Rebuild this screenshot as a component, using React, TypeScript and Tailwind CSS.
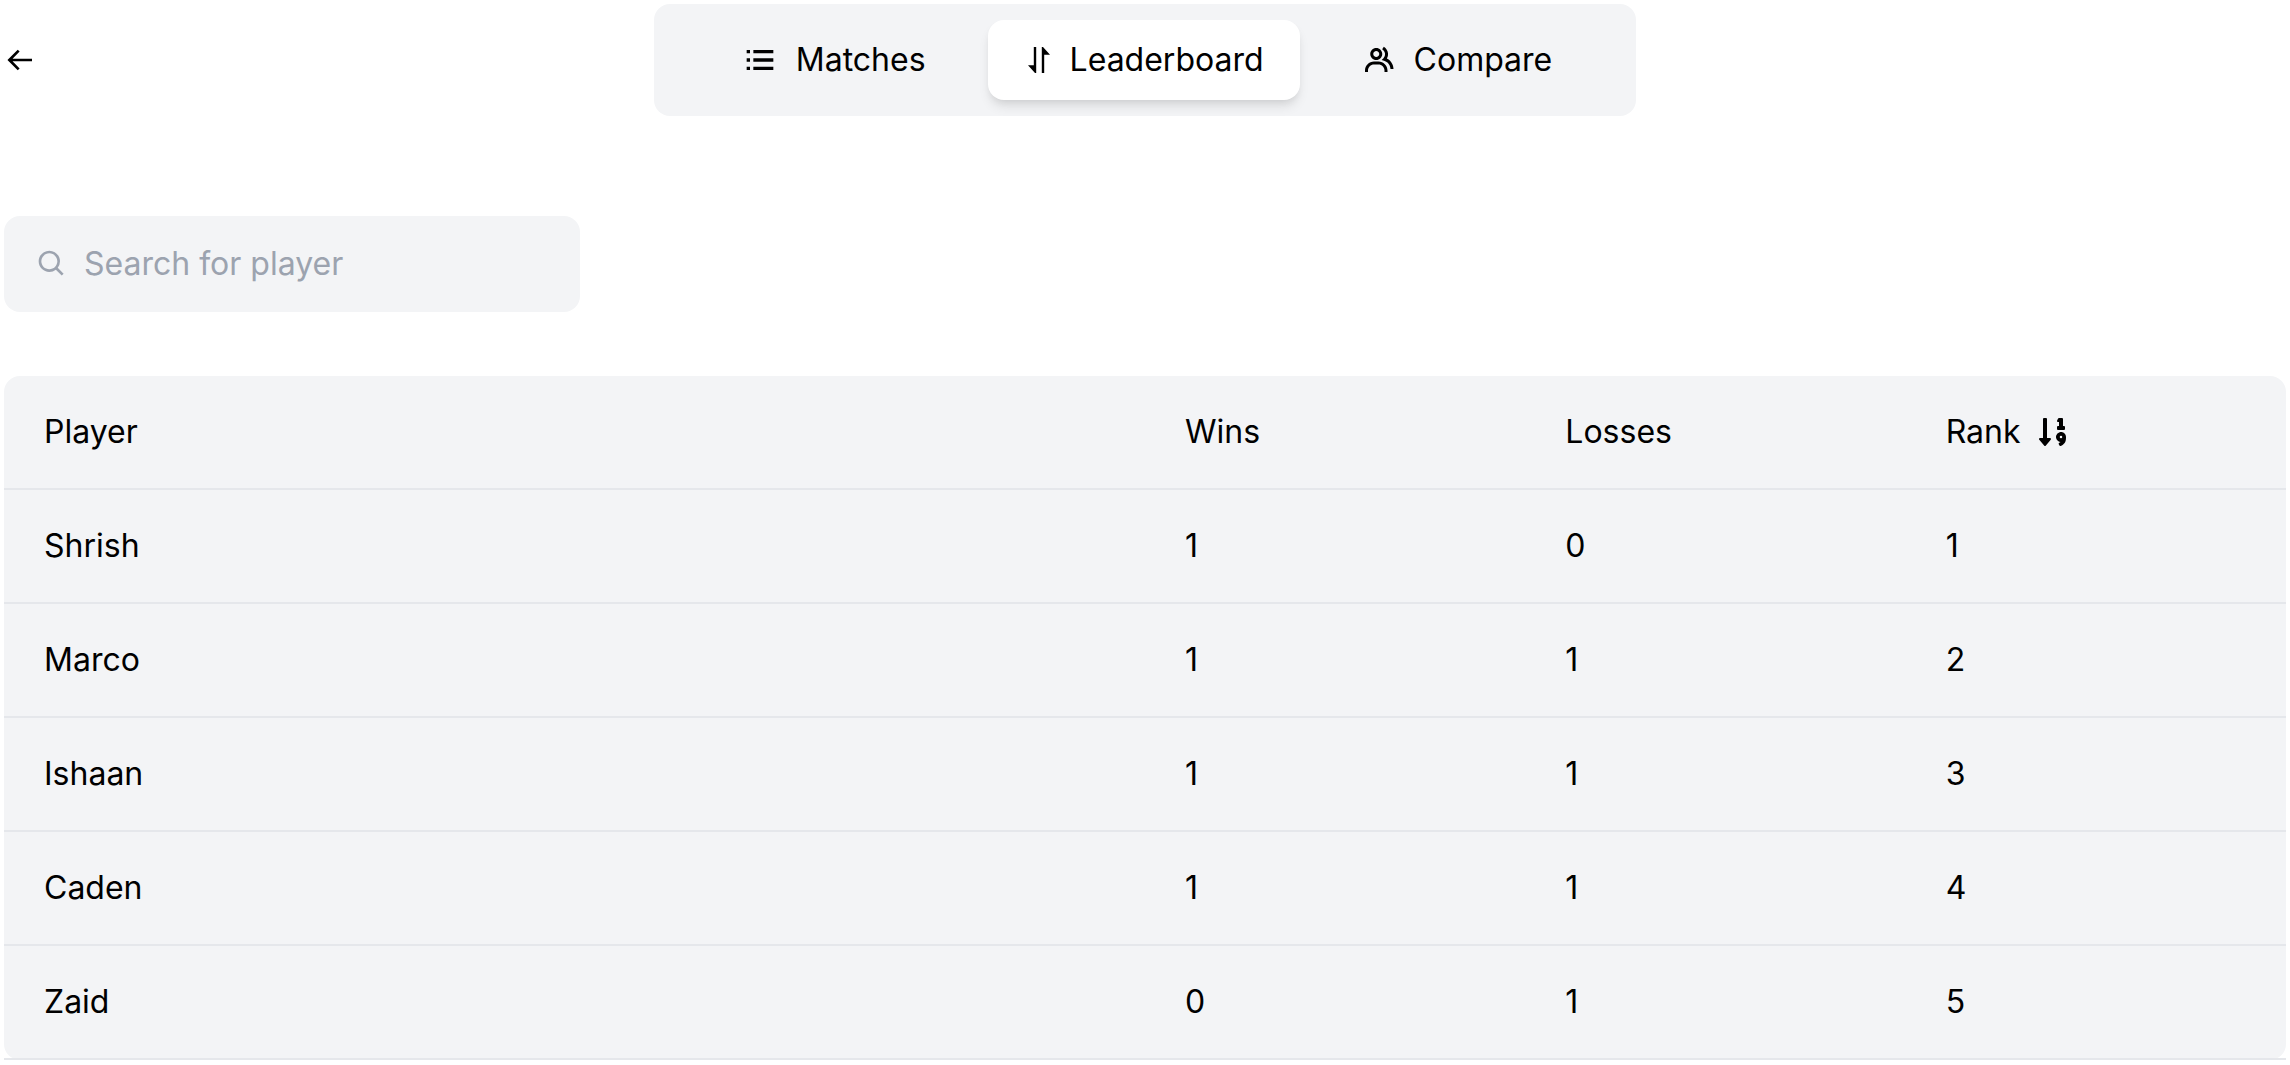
import { useState } from "react";
import type { ReactNode } from "react";
import { BiArrowBack, BiGroup, BiListUl, BiSearch } from "react-icons/bi";
import { FaSortNumericDown } from "react-icons/fa";

type Player = { name: string; wins: number; losses: number; rank: number };

const players: Player[] = [
  { name: "Shrish", wins: 1, losses: 0, rank: 1 },
  { name: "Marco", wins: 1, losses: 1, rank: 2 },
  { name: "Ishaan", wins: 1, losses: 1, rank: 3 },
  { name: "Caden", wins: 1, losses: 1, rank: 4 },
  { name: "Zaid", wins: 0, losses: 1, rank: 5 },
];

function DownUpIcon() {
  return (
    <svg viewBox="0 0 30 30" className="size-[30px]" fill="currentColor" aria-hidden="true">
      <path d="M9.8 2h2.4v26h-1.2L4 20.3h5.8z" />
      <path d="M17.8 28h2.4V9.7H26L19 2h-1.2z" />
    </svg>
  );
}

function Tab({ icon, label, active, onSelect }: { icon: ReactNode; label: string; active: boolean; onSelect: () => void }) {
  return (
    <button
      type="button"
      role="tab"
      aria-selected={active}
      onClick={onSelect}
      className={
        active
          ? "flex items-center gap-4 rounded-2xl bg-white px-9 py-4 shadow-[0_8px_12px_-2px_rgba(0,0,0,0.1),0_4px_8px_-4px_rgba(0,0,0,0.1)]"
          : "flex items-center gap-4 rounded-2xl px-9 py-4"
      }
    >
      {icon}
      {label}
    </button>
  );
}

export default function App() {
  const [tab, setTab] = useState("Leaderboard");
  const [query, setQuery] = useState("");
  const shown = players.filter((p) => p.name.toLowerCase().includes(query.toLowerCase()));

  const tabs = [
    { label: "Matches", icon: <BiListUl className="size-10" /> },
    { label: "Leaderboard", icon: <DownUpIcon /> },
    { label: "Compare", icon: <BiGroup className="size-9" /> },
  ];

  return (
    <main className="bg-white p-1 font-['Inter',sans-serif] text-[32px] leading-[48px] text-black">
      <header className="grid grid-cols-[1fr_auto_1fr] items-center">
        <button type="button" aria-label="Back" className="justify-self-start">
          <BiArrowBack className="size-8" />
        </button>
        <div role="tablist" className="flex gap-[26px] rounded-2xl bg-gray-100 py-4 pr-12 pl-[50px]">
          {tabs.map((t) => (
            <Tab key={t.label} icon={t.icon} label={t.label} active={tab === t.label} onSelect={() => setTab(t.label)} />
          ))}
        </div>
      </header>

      <label className="mt-25 flex w-full max-w-[576px] items-center gap-4 rounded-2xl bg-gray-100 px-8 py-6 text-[#9ca3af]">
        <BiSearch className="size-8 shrink-0" />
        <input
          type="text"
          aria-label="Search for player"
          placeholder="Search for player"
          value={query}
          onChange={(e) => setQuery(e.target.value)}
          className="h-12 min-w-0 flex-1 bg-transparent text-black outline-none placeholder:text-[#9ca3af]"
        />
      </label>

      <table className="mt-16 w-full table-fixed rounded-2xl bg-gray-100 text-left">
        <thead>
          <tr className="border-b-2 border-gray-200">
            <th className="w-1/2 px-10 py-8 font-normal">Player</th>
            <th className="w-1/6 px-10 py-8 font-normal">Wins</th>
            <th className="w-1/6 px-10 py-8 font-normal">Losses</th>
            <th className="w-1/6 px-10 py-8 font-normal" aria-sort="ascending">
              <button type="button" className="flex items-center gap-4">
                Rank
                <FaSortNumericDown className="size-8" />
              </button>
            </th>
          </tr>
        </thead>
        <tbody>
          {shown.map((p) => (
            <tr key={p.name} className="border-b-2 border-gray-200">
              <td className="px-10 py-8">{p.name}</td>
              <td className="px-10 py-8">{p.wins}</td>
              <td className="px-10 py-8">{p.losses}</td>
              <td className="px-10 py-8">{p.rank}</td>
            </tr>
          ))}
        </tbody>
      </table>
    </main>
  );
}
